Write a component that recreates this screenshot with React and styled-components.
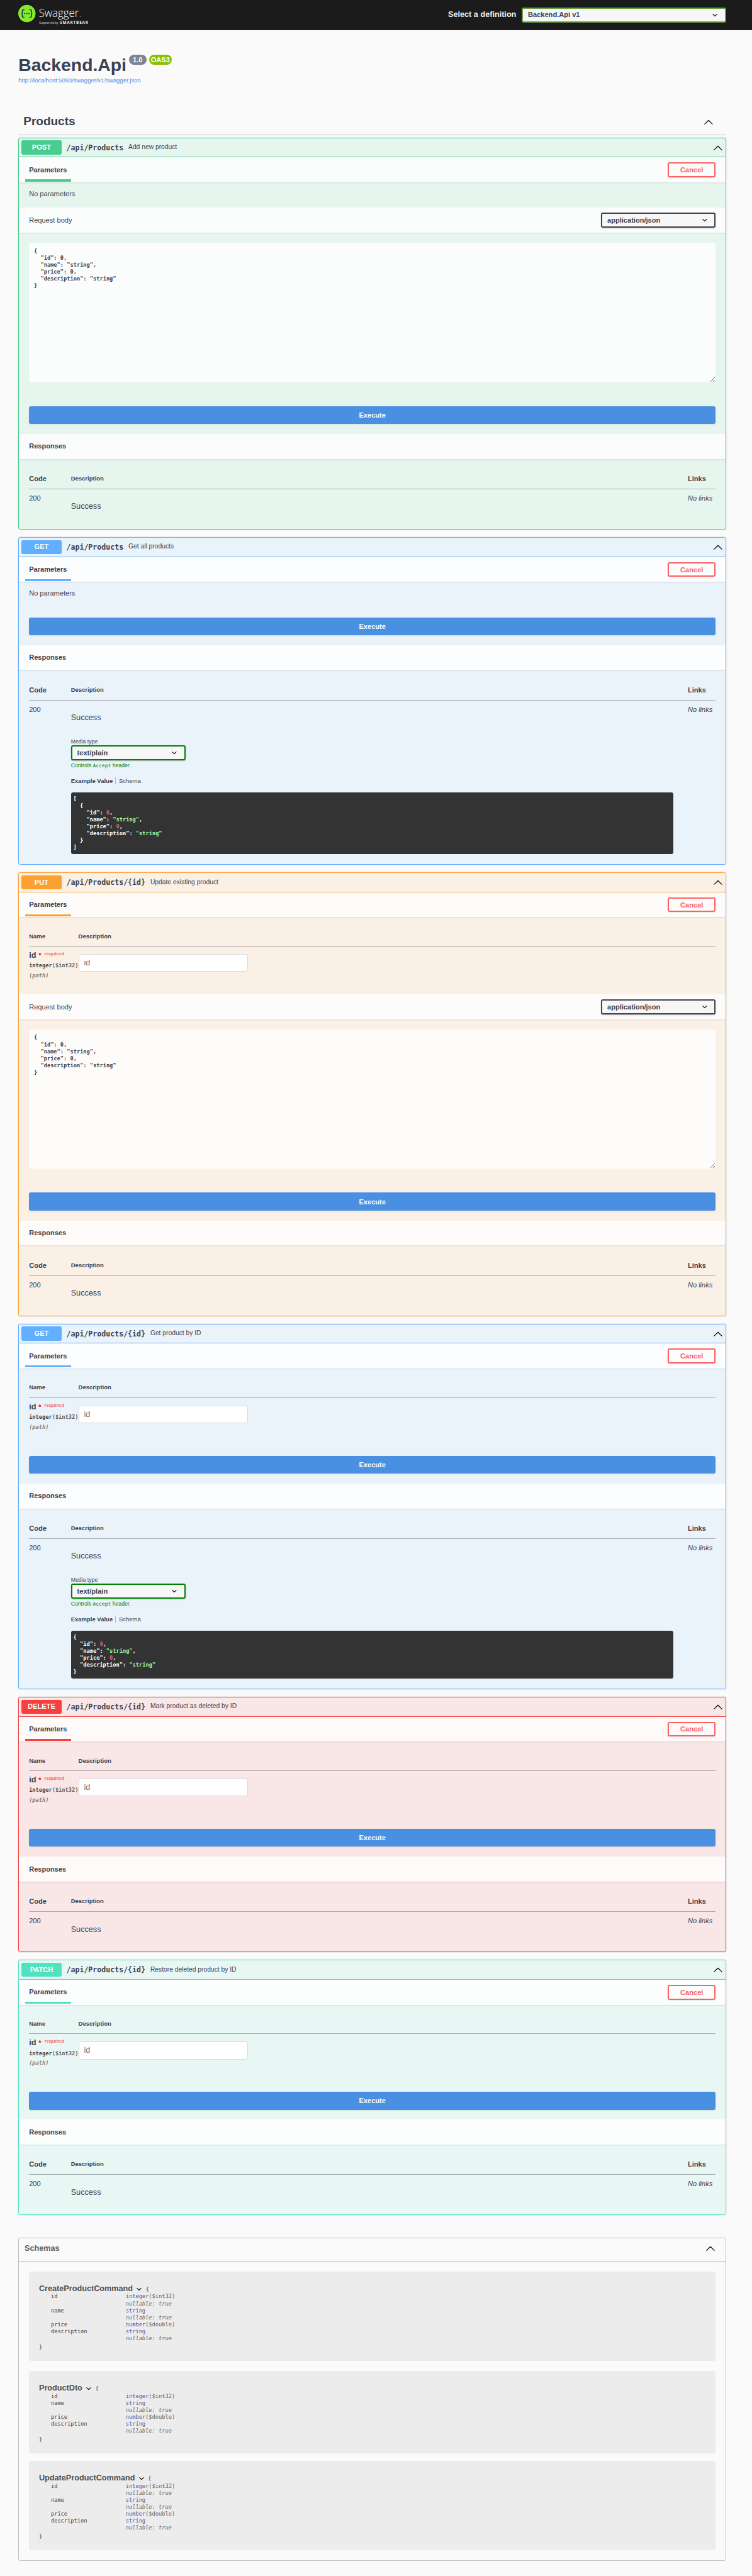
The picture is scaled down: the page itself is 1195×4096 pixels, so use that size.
import React from "react";
import styled, { createGlobalStyle } from "styled-components";

/* 1rem is ten design pixels */
const GlobalStyle = createGlobalStyle`
  html { font-size: 7.921px; background: #fafafa; }
  body {
    margin: 0;
    color: #3b4151;
    font-family: "Liberation Sans", Arial, sans-serif;
    font-size: 1.4rem;
    line-height: 1.6rem;
  }
  *, *::before, *::after { box-sizing: border-box; }
`;

const MONO = '"DejaVu Sans Mono", "Liberation Mono", monospace';

const METHODS = {
  post: "73, 204, 144",
  get: "97, 175, 254",
  put: "252, 161, 48",
  delete: "249, 62, 62",
  patch: "80, 227, 194",
};

const Page = styled.div`
  width: 100%;
  height: 100vh;
  overflow: hidden;
`;

const TopBar = styled.header`
  height: 6rem;
  padding: 0 5.2rem 0 3.7rem;
  background: #1b1b1b;
  display: flex;
  align-items: center;
  justify-content: space-between;
`;

const LogoSvg = styled.svg`
  width: 15rem;
  height: 6rem;
  display: block;
`;

const Definition = styled.label`
  display: flex;
  align-items: center;
  gap: 1.1rem;
  color: #f0f0f0;
  font-size: 1.6rem;
  font-weight: 700;
`;

const SelectBox = styled.div`
  width: ${(p) => p.$width};
  height: 3rem;
  padding: 0 1rem 0 1rem;
  border: 2px solid ${(p) => p.$color};
  border-radius: 0.4rem;
  background: #f7f7f7;
  box-shadow: 0 1px 2px rgba(0, 0, 0, 0.25);
  color: #3b4151;
  display: flex;
  align-items: center;
  justify-content: space-between;
  font-size: 1.4rem;
  font-weight: 700;
`;

const Icon = styled.svg`
  width: 2rem;
  height: 2rem;
  flex: none;
  display: block;
`;

const Wrapper = styled.main`
  width: 142rem;
  margin-left: 3.7rem;
`;

const Info = styled.section`
  height: 15.9rem;
  padding-top: 5rem;
`;

const TitleRow = styled.div`
  display: flex;
  align-items: flex-start;
`;

const Title = styled.h1`
  margin: 0 0.5rem 0 0;
  font-size: 3.58rem;
  line-height: 4.1rem;
  font-weight: 700;
`;

const Badge = styled.span`
  height: 2.04rem;
  width: ${(p) => p.$width};
  margin-right: 0.5rem;
  border-radius: 1.02rem;
  background: ${(p) => p.$bg};
  color: #fff;
  display: flex;
  align-items: center;
  justify-content: center;
  font-size: 1.4rem;
  font-weight: 700;
`;

const SpecLink = styled.a`
  display: block;
  margin-top: 0.3rem;
  color: #4990e2;
  font-size: 1.2rem;
  line-height: 1.4rem;
`;

const TagHeader = styled.h2`
  height: 5.2rem;
  margin: 0 0 0.5rem;
  padding: 0 2.6rem 0 1rem;
  border-bottom: 1px solid #bdbfc4;
  display: flex;
  align-items: center;
  justify-content: space-between;
  font-size: 2.4rem;
  font-weight: 700;
`;

const Block = styled.article`
  height: ${(p) => p.$height};
  margin-bottom: 1.5rem;
  border: 1px solid rgb(${(p) => p.$rgb});
  border-radius: 0.4rem;
  background: rgba(${(p) => p.$rgb}, 0.1);
  box-shadow: 0 0 0.3rem rgba(0, 0, 0, 0.19);
`;

const Summary = styled.div`
  height: 3.9rem;
  padding: 0 0.6rem 0 0.5rem;
  border-bottom: 1px solid rgb(${(p) => p.$rgb});
  display: flex;
  align-items: center;
`;

const Method = styled.span`
  width: 8rem;
  height: 2.8rem;
  border-radius: 0.3rem;
  background: rgb(${(p) => p.$rgb});
  color: #fff;
  text-shadow: 0 1px 0 rgba(0, 0, 0, 0.1);
  display: flex;
  align-items: center;
  justify-content: center;
  font-size: 1.4rem;
  font-weight: 700;
`;

const Path = styled.span`
  padding: 0.1rem 1rem 0;
  font-family: ${MONO};
  font-size: 1.462rem;
  font-weight: 700;
`;

const SummaryText = styled.span`
  flex: 1;
  font-size: 1.3rem;
`;

const SectionHeader = styled.div`
  position: relative;
  height: 5rem;
  padding: 0 2rem;
  background: rgba(255, 255, 255, 0.8);
  box-shadow: 0 1px 2px rgba(0, 0, 0, 0.1);
  display: flex;
  align-items: center;
  justify-content: space-between;
`;

const Heading = styled.h4`
  margin: 0;
  font-size: 1.4rem;
  font-weight: ${(p) => (p.$light ? 400 : 700)};
`;

const Tab = styled.div`
  align-self: stretch;
  margin-left: -0.8rem;
  padding: 0 0.8rem;
  display: flex;
  align-items: center;

  &::after {
    content: "";
    position: absolute;
    left: 1.2rem;
    bottom: 0.2rem;
    width: 9.2rem;
    height: 0.4rem;
    background: rgb(${(p) => p.$rgb});
  }
`;

const CancelButton = styled.button`
  width: 9.6rem;
  height: 3rem;
  padding: 0;
  border: 2px solid #ff6060;
  border-radius: 0.4rem;
  background: transparent;
  box-shadow: 0 1px 2px rgba(0, 0, 0, 0.1);
  color: #ff6060;
  font: 700 1.4rem "Liberation Sans", Arial, sans-serif;
`;

const NoParameters = styled.p`
  height: 5.1rem;
  margin: 0;
  padding: 1.5rem 2rem 0;
`;

const BodyArea = styled.div`
  padding: 2rem 2rem 2.8rem;
`;

const BodyText = styled.textarea`
  display: block;
  width: 100%;
  height: 28rem;
  padding: 1rem;
  border: 0;
  border-radius: 0.4rem;
  outline: none;
  background: rgba(255, 255, 255, 0.8);
  color: #3b4151;
  font-family: ${MONO};
  font-size: 1.096rem;
  line-height: 1.4rem;
  font-weight: 700;
`;

const ExecuteArea = styled.div`
  padding: 2rem;
`;

const ExecuteButton = styled.button`
  display: block;
  width: 100%;
  height: 3.6rem;
  padding: 0;
  border: 0;
  border-radius: 0.4rem;
  background: #4990e2;
  box-shadow: 0 1px 2px rgba(0, 0, 0, 0.1);
  color: #fff;
  font: 700 1.4rem "Liberation Sans", Arial, sans-serif;
`;

const ParamsTable = styled.div`
  height: 15.5rem;
  padding: 0 2rem;
`;

const ParamsHead = styled.div`
  height: 5.9rem;
  padding-top: 2rem;
  border-bottom: 1px solid rgba(59, 65, 81, 0.4);
  display: grid;
  grid-template-columns: 9.9rem 1fr;
  align-items: center;
  font-size: 1.2rem;
  font-weight: 700;
`;

const ParamsRow = styled.div`
  display: grid;
  grid-template-columns: 9.9rem 1fr;
`;

const ParamName = styled.div`
  padding-top: 0.9rem;
  display: flex;
  align-items: flex-start;
  font-size: 1.6rem;
  line-height: 1.8rem;
  font-weight: 700;
`;

const Star = styled.span`
  margin-left: 0.5rem;
  color: #f00;
  font-size: 1.4rem;
  line-height: 1.8rem;
`;

const Required = styled.span`
  margin-left: 0.6rem;
  color: rgba(255, 0, 0, 0.6);
  font-size: 1rem;
  line-height: 1.2rem;
`;

const ParamType = styled.div`
  padding-top: 0.5rem;
  font-family: ${MONO};
  font-size: 1.096rem;
  line-height: 1.5rem;
  font-weight: 700;
  white-space: nowrap;
`;

const Format = styled.span`
  color: #606060;
`;

const ParamIn = styled.div`
  padding-top: 0.5rem;
  color: #808080;
  font-family: ${MONO};
  font-size: 1.096rem;
  line-height: 1.4rem;
  font-weight: 700;
  font-style: italic;
`;

const ParamInput = styled.input`
  display: block;
  width: 34rem;
  height: 3.6rem;
  margin-top: 1.5rem;
  padding: 0 1rem;
  border: 1px solid #d9d9d9;
  border-radius: 0.4rem;
  background: #fff;
  font: 1.6rem "Liberation Sans", Arial, sans-serif;

  &::placeholder { color: #757575; opacity: 1; }
`;

const Responses = styled.div`
  padding: 0 2rem;
`;

const ResponsesHead = styled.div`
  height: 6.1rem;
  padding-top: 2rem;
  border-bottom: 1px solid rgba(59, 65, 81, 0.4);
  display: grid;
  grid-template-columns: 8.4rem 1fr 5.6rem;
  align-items: center;
  font-weight: 700;
`;

const SmallHead = styled.span`
  font-size: 1.2rem;
`;

const ResponseRow = styled.div`
  padding-top: 1rem;
  display: grid;
  grid-template-columns: 8.4rem 1fr 5.6rem;
`;

const NoLinks = styled.i`
  white-space: nowrap;
`;

const ResponseText = styled.p`
  margin: 1.6rem 0 0;
  font-size: 1.6rem;
  line-height: 1.8rem;
`;

const MediaType = styled.div`
  padding-top: 3.15rem;
  font-size: 1.1rem;
  line-height: 1.3rem;
`;

const MediaSelect = styled.div`
  padding: 0.2rem 0 0.3rem;
`;

const MediaNote = styled.div`
  height: 1.3rem;
  color: #008000;
`;

const NoteCode = styled.code`
  font-family: ${MONO};
  font-size: 1.005rem;
  line-height: 1;
`;

const ExampleTabs = styled.div`
  margin: 1.75rem 0 1.6rem;
  display: flex;
  font-size: 1.2rem;
  line-height: 1.45rem;
`;

const ExampleTab = styled.span`
  font-weight: ${(p) => (p.$active ? 700 : 400)};
  padding-right: ${(p) => (p.$active ? "0.5rem" : 0)};
  margin-right: ${(p) => (p.$active ? "0.6rem" : 0)};
  border-right: ${(p) => (p.$active ? "1px solid rgba(59, 65, 81, 0.3)" : 0)};
`;

const Example = styled.pre`
  width: 120.9rem;
  margin: 0;
  padding: 0.6rem 0.5rem;
  border-radius: 0.4rem;
  background: #333;
  color: #fff;
  font-family: ${MONO};
  font-size: 1.096rem;
  line-height: 1.4rem;
  font-weight: 700;
`;

const Num = styled.span`
  color: #d36363;
`;

const Str = styled.span`
  color: #a2fca2;
`;

const Schemas = styled.section`
  height: 64.8rem;
  margin-top: 4.55rem;
  border: 1px solid #bdbfc4;
  border-radius: 0.4rem;
`;

const SchemasHeader = styled.h4`
  height: 4.6rem;
  margin: 0 0 2rem;
  padding: 0 2rem 0.5rem 1.1rem;
  border-bottom: 1px solid #bdbfc4;
  color: #606060;
  display: flex;
  align-items: center;
  justify-content: space-between;
  font-size: 1.6rem;
`;

const Model = styled.div`
  margin: 0 2rem ${(p) => (p.$first ? "2rem" : "1.5rem")};
  padding: 2.5rem 2rem 1.65rem;
  border-radius: 0.4rem;
  background: #ececec;
  font-family: ${MONO};
  font-size: 1.096rem;
  line-height: 1.4rem;
`;

const ModelTitle = styled.div`
  height: 1.9rem;
  display: flex;
  align-items: center;
`;

const ModelName = styled.span`
  margin-right: 0.3rem;
  color: #505050;
  font: 700 1.6rem "Liberation Sans", Arial, sans-serif;
`;

const OpenBrace = styled.span`
  padding: 0.3rem 0 0 0.3rem;
`;

const ToggleIcon = styled.span`
  padding-top: 0.2rem;
`;

const CloseBrace = styled.div`
  line-height: 2.1rem;
`;

const Property = styled.div`
  padding-left: 2.4rem;
  display: grid;
  grid-template-columns: 15rem 1fr;
`;

const PropType = styled.span`
  color: #5555aa;
`;

const Nullable = styled.div`
  color: #6b6b6b;
  font-style: italic;
`;

function ArrowDown() {
  return (
    <Icon viewBox="0 0 20 20" aria-hidden="true">
      <path d="M13.418 7.859c.271-.268.709-.268.978 0 .27.268.272.701 0 .969l-3.908 3.83c-.27.268-.707.268-.979 0l-3.908-3.83c-.27-.267-.27-.701 0-.969.271-.268.709-.268.978 0L10 11l3.418-3.141z" />
    </Icon>
  );
}

function ArrowUp() {
  return (
    <Icon viewBox="0 0 20 20" aria-hidden="true">
      <path d="M17.418 14.908c.272.268.709.268.979 0s.271-.701 0-.969l-7.908-7.83c-.27-.268-.707-.268-.979 0l-7.908 7.83c-.27.268-.27.701 0 .969s.709.268.979 0L10 7.767l7.418 7.141z" />
    </Icon>
  );
}

function Logo() {
  return (
    <LogoSvg viewBox="0 0 150 60">
      <circle cx="17.3" cy="27.2" r="17.4" fill="#85ea2d" />
      <g fill="none" stroke="#173647" strokeWidth="2" strokeLinecap="round">
        <path d="M11.6 19.4c-2.6-.2-3.3.8-3.3 2.8v2c0 1.8-.6 2.9-1.9 2.9 1.3 0 1.9 1.2 1.9 3v2c0 2 .7 2.900 3.300 2.700" />
        <path d="M23 19.400c2.600-.2 3.300.8 3.300 2.800v2c0 1.800.6 2.900 1.900 2.900-1.300 0-1.900 1.200-1.900 3v2c0 2-.7 2.900-3.300 2.700" />
      </g>
      <g fill="#173647">
        <circle cx="12.9" cy="27.2" r="1.3" />
        <circle cx="17.3" cy="27.2" r="1.3" />
        <circle cx="21.7" cy="27.2" r="1.3" />
      </g>
      <g fill="#fff" fontFamily="'Open Sans', 'Noto Sans', sans-serif">
        <text x="41.2" y="34.2" fontSize="22" fontWeight="300" textLength="80.5" lengthAdjust="spacingAndGlyphs">Swagger</text>
        <text x="42" y="48.2" fontSize="6.6" textLength="38.5" lengthAdjust="spacingAndGlyphs" fill="#ddd">Supported by</text>
        <text x="83.6" y="48.2" fontSize="8" fontWeight="700" textLength="56.5" lengthAdjust="spacing" fill="#e8e8e8">SMARTBEAR</text>
      </g>
      <path d="M123.5 33.5h2.6" stroke="#999" strokeWidth="1" />
    </LogoSvg>
  );
}

function Select({ value, width = "23rem", color = "#41444e" }) {
  return (
    <SelectBox $width={width} $color={color}>
      {value}
      <ArrowDown />
    </SelectBox>
  );
}

const REQUEST = `{
  "id": 0,
  "name": "string",
  "price": 0,
  "description": "string"
}`;

function ExampleObject({ indent = "" }) {
  return (
    <>
      {indent}{"{\n"}
      {indent}{'  "id": '}<Num>0</Num>{",\n"}
      {indent}{'  "name": '}<Str>"string"</Str>{",\n"}
      {indent}{'  "price": '}<Num>0</Num>{",\n"}
      {indent}{'  "description": '}<Str>"string"</Str>{"\n"}
      {indent}{"}"}
    </>
  );
}

function MediaExample({ list }) {
  return (
    <MediaType>
      Media type
      <MediaSelect>
        <Select value="text/plain" color="#008000" />
      </MediaSelect>
      <MediaNote>
        Controls <NoteCode>Accept</NoteCode> header.
      </MediaNote>
      <ExampleTabs>
        <ExampleTab $active>Example Value</ExampleTab>
        <ExampleTab>Schema</ExampleTab>
      </ExampleTabs>
      <Example>
        {list && "[\n"}
        <ExampleObject indent={list ? "  " : ""} />
        {list && "\n]"}
      </Example>
    </MediaType>
  );
}

function Parameters() {
  return (
    <ParamsTable>
      <ParamsHead>
        <span>Name</span>
        <span>Description</span>
      </ParamsHead>
      <ParamsRow>
        <div>
          <ParamName>
            id<Star>*</Star>
            <Required>required</Required>
          </ParamName>
          <ParamType>
            integer<Format>($int32)</Format>
          </ParamType>
          <ParamIn>(path)</ParamIn>
        </div>
        <ParamInput placeholder="id" />
      </ParamsRow>
    </ParamsTable>
  );
}

function Operation({ method, path, text, height, hasId, hasBody, example }) {
  const rgb = METHODS[method];
  return (
    <Block $rgb={rgb} $height={height}>
      <Summary $rgb={rgb}>
        <Method $rgb={rgb}>{method.toUpperCase()}</Method>
        <Path>{path}</Path>
        <SummaryText>{text}</SummaryText>
        <ArrowUp />
      </Summary>
      <SectionHeader>
        <Tab $rgb={rgb}>
          <Heading>Parameters</Heading>
        </Tab>
        <CancelButton>Cancel</CancelButton>
      </SectionHeader>
      {hasId ? <Parameters /> : <NoParameters>No parameters</NoParameters>}
      {hasBody && (
        <>
          <SectionHeader>
            <Heading $light>Request body</Heading>
            <Select value="application/json" />
          </SectionHeader>
          <BodyArea>
            <BodyText readOnly spellCheck={false} value={REQUEST} />
          </BodyArea>
        </>
      )}
      <ExecuteArea>
        <ExecuteButton>Execute</ExecuteButton>
      </ExecuteArea>
      <SectionHeader>
        <Heading>Responses</Heading>
      </SectionHeader>
      <Responses>
        <ResponsesHead>
          <span>Code</span>
          <SmallHead>Description</SmallHead>
          <span>Links</span>
        </ResponsesHead>
        <ResponseRow>
          <span>200</span>
          <div>
            <ResponseText>Success</ResponseText>
            {example && <MediaExample list={example === "list"} />}
          </div>
          <NoLinks>No links</NoLinks>
        </ResponseRow>
      </Responses>
    </Block>
  );
}

function Schema({ name, properties, first }) {
  return (
    <Model $first={first}>
      <ModelTitle>
        <ModelName>{name}</ModelName>
        <ToggleIcon>
          <ArrowDown />
        </ToggleIcon>
        <OpenBrace>{"{"}</OpenBrace>
      </ModelTitle>
      {properties.map(([key, type, format, nullable]) => (
        <Property key={key}>
          <span>{key}</span>
          <div>
            <PropType>{type}</PropType>
            {format && <Format>({format})</Format>}
            {nullable && <Nullable>nullable: true</Nullable>}
          </div>
        </Property>
      ))}
      <CloseBrace>{"}"}</CloseBrace>
    </Model>
  );
}

const OPERATIONS = [
  { method: "post", path: "/api/Products", text: "Add new product", height: "78.7rem", hasBody: true },
  { method: "get", path: "/api/Products", text: "Get all products", height: "65.8rem", example: "list" },
  { method: "put", path: "/api/Products/{id}", text: "Update existing product", height: "89.1rem", hasId: true, hasBody: true },
  { method: "get", path: "/api/Products/{id}", text: "Get product by ID", height: "73.4rem", hasId: true, example: "single" },
  { method: "delete", path: "/api/Products/{id}", text: "Mark product as deleted by ID", height: "51.3rem", hasId: true },
  { method: "patch", path: "/api/Products/{id}", text: "Restore deleted product by ID", height: "51.3rem", hasId: true },
];

const properties = (idNullable) => [
  ["id", "integer", "$int32", idNullable],
  ["name", "string", null, true],
  ["price", "number", "$double", false],
  ["description", "string", null, true],
];

export default function App() {
  return (
    <Page>
      <GlobalStyle />
      <TopBar>
        <Logo />
        <Definition>
          Select a definition
          <Select value="Backend.Api v1" width="41rem" color="#62a03f" />
        </Definition>
      </TopBar>
      <Wrapper>
        <Info>
          <TitleRow>
            <Title>Backend.Api</Title>
            <Badge $bg="#7d8492" $width="3.5rem">1.0</Badge>
            <Badge $bg="#89bf04" $width="4.6rem">OAS3</Badge>
          </TitleRow>
          <SpecLink>http://localhost:5093/swagger/v1/swagger.json</SpecLink>
        </Info>
        <TagHeader>
          Products
          <ArrowUp />
        </TagHeader>
        {OPERATIONS.map((op) => (
          <Operation key={op.method + op.path} {...op} />
        ))}
        <Schemas>
          <SchemasHeader>
            Schemas
            <ArrowUp />
          </SchemasHeader>
          <Schema first name="CreateProductCommand" properties={properties(true)} />
          <Schema name="ProductDto" properties={properties(false)} />
          <Schema name="UpdateProductCommand" properties={properties(true)} />
        </Schemas>
      </Wrapper>
    </Page>
  );
}
